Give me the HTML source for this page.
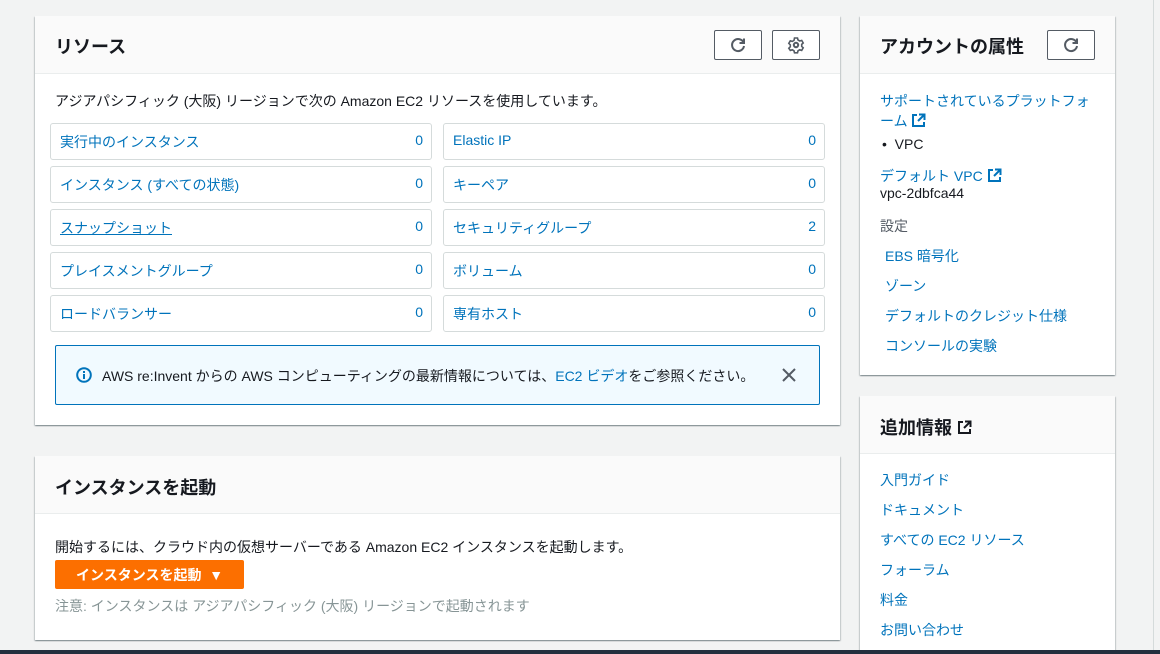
<!DOCTYPE html>
<html><head><meta charset="utf-8"><style>
*{box-sizing:border-box;margin:0;padding:0}
html,body{width:1160px;height:654px;overflow:hidden}
body{background:#f2f3f3;font-family:"Liberation Sans","Noto Sans CJK JP",sans-serif;color:#16191f;font-size:14px;position:relative}
.p{position:absolute;background:#fff;box-shadow:0 1px 1px 0 rgba(0,28,36,.3),1px 1px 1px 0 rgba(0,28,36,.15),-1px 1px 1px 0 rgba(0,28,36,.15)}
.h{position:absolute;left:0;right:0;top:0;background:#fafafa;border-bottom:1px solid #eaeded}
.h b{position:absolute;left:20px;font-size:18px;font-weight:bold}
.a{position:absolute;white-space:nowrap}
.l{color:#0073bb}
.btn{position:absolute;width:48px;height:30px;border:1px solid #545b64;background:#fff;border-radius:2px;display:flex;align-items:center;justify-content:center}
.c{position:absolute;width:382px;height:37px;border:1px solid #d5dbdb;border-radius:3px;color:#0073bb}
.c span{position:absolute;left:9px;top:8px}
.c i{position:absolute;right:8px;top:8px;font-style:normal}
</style></head><body>
<div class="p" style="left:35px;top:16px;width:805px;height:409px">
 <div class="h" style="height:58px"><b style="top:17px">リソース</b></div>
 <div class="btn" style="left:679px;top:14px"><svg width="18" height="18" viewBox="0 0 18 18" fill="none" stroke="#545b64" stroke-width="2"><path d="M14.5 6.5A6 6 0 1 0 15 10"/><path d="M15 2.5v4.5h-4.5"/></svg></div>
 <div class="btn" style="left:737px;top:14px"><svg width="18" height="18" viewBox="0 0 18 18" fill="none" stroke="#545b64" stroke-width="2"><circle cx="9" cy="9" r="2.2"/><path d="M7.5 2h3l.5 2 1.7 1 2-.6 1.5 2.6-1.5 1.4v2l1.5 1.4-1.5 2.6-2-.6-1.7 1-.5 2h-3l-.5-2-1.7-1-2 .6L1.8 12.2 3.3 10.8v-2L1.8 7.4 3.3 4.8l2 .6L7 4.4z" stroke-width="1.6"/></svg></div>
 <div class="a" style="left:20px;top:75px">アジアパシフィック (大阪) リージョンで次の Amazon EC2 リソースを使用しています。</div>
</div>
<div class="c" style="left:50px;top:123px"><span>実行中のインスタンス</span><i>0</i></div>
<div class="c" style="left:443px;top:123px"><span>Elastic IP</span><i>0</i></div>
<div class="c" style="left:50px;top:166px"><span>インスタンス (すべての状態)</span><i>0</i></div>
<div class="c" style="left:443px;top:166px"><span>キーペア</span><i>0</i></div>
<div class="c" style="left:50px;top:209px"><span style="text-decoration:underline">スナップショット</span><i>0</i></div>
<div class="c" style="left:443px;top:209px"><span>セキュリティグループ</span><i>2</i></div>
<div class="c" style="left:50px;top:252px"><span>プレイスメントグループ</span><i>0</i></div>
<div class="c" style="left:443px;top:252px"><span>ボリューム</span><i>0</i></div>
<div class="c" style="left:50px;top:295px"><span>ロードバランサー</span><i>0</i></div>
<div class="c" style="left:443px;top:295px"><span>専有ホスト</span><i>0</i></div>
<div style="position:absolute;left:55px;top:345px;width:765px;height:60px;background:#f1faff;border:1px solid #0073bb;border-radius:2px">
 <svg style="position:absolute;left:20px;top:21px" width="16" height="16" viewBox="0 0 16 16"><circle cx="8" cy="8" r="6.8" fill="none" stroke="#0073bb" stroke-width="2"/><rect x="7" y="7" width="2" height="5" fill="#0073bb"/><rect x="7" y="4" width="2" height="2" fill="#0073bb"/></svg>
 <div class="a" style="left:46px;top:20px">AWS re:Invent からの AWS コンピューティングの最新情報については、<span class="l">EC2 ビデオ</span>をご参照ください。</div>
 <svg style="position:absolute;left:726px;top:22px" width="14" height="14" viewBox="0 0 14 14" stroke="#545b64" stroke-width="2"><path d="M1 1l12 12M13 1L1 13"/></svg>
</div>
<div class="p" style="left:35px;top:456px;width:805px;height:184px">
 <div class="h" style="height:58px"><b style="top:18px">インスタンスを起動</b></div>
 <div class="a" style="left:20px;top:81px">開始するには、クラウド内の仮想サーバーである Amazon EC2 インスタンスを起動します。</div>
 <div class="a" style="left:20px;top:104px;width:189px;height:29px;background:#fc6f00;border-radius:2px;color:#fff;font-weight:bold;font-size:14px;padding:5px 0 0 21px">インスタンスを起動 &nbsp;▼</div>
 <div class="a" style="left:20px;top:140px;color:#879596">注意: インスタンスは アジアパシフィック (大阪) リージョンで起動されます</div>
</div>
<div class="p" style="left:860px;top:16px;width:255px;height:359px">
 <div class="h" style="height:58px"><b style="top:17px">アカウントの属性</b></div>
 <div class="btn" style="left:187px;top:14px"><svg width="18" height="18" viewBox="0 0 18 18" fill="none" stroke="#545b64" stroke-width="2"><path d="M14.5 6.5A6 6 0 1 0 15 10"/><path d="M15 2.5v4.5h-4.5"/></svg></div>
 <div class="a l" style="left:20px;top:75px">サポートされているプラットフォ</div>
 <div class="a l" style="left:20px;top:95px">ーム <svg width="15" height="15" viewBox="0 0 15 15" fill="none" stroke="#0073bb" stroke-width="2" style="vertical-align:-2px"><path d="M6 2H2v11h11V9M8 1.5h5.5V7M13 2L7 8"/></svg></div>
 <div class="a" style="left:22px;top:120px">•&nbsp; VPC</div>
 <div class="a l" style="left:20px;top:150px">デフォルト VPC <svg width="15" height="15" viewBox="0 0 15 15" fill="none" stroke="#0073bb" stroke-width="2" style="vertical-align:-2px"><path d="M6 2H2v11h11V9M8 1.5h5.5V7M13 2L7 8"/></svg></div>
 <div class="a" style="left:20px;top:169px">vpc-2dbfca44</div>
 <div class="a" style="left:20px;top:200px;color:#545b64">設定</div>
 <div class="a l" style="left:25px;top:230px">EBS 暗号化</div>
 <div class="a l" style="left:25px;top:260px">ゾーン</div>
 <div class="a l" style="left:25px;top:290px">デフォルトのクレジット仕様</div>
 <div class="a l" style="left:25px;top:320px">コンソールの実験</div>
</div>
<div class="p" style="left:860px;top:396px;width:255px;height:258px">
 <div class="h" style="height:58px"><b style="top:18px">追加情報 <svg width="15" height="15" viewBox="0 0 15 15" fill="none" stroke="#16191f" stroke-width="2" style="vertical-align:-1px"><path d="M6 2H2v11h11V9M8 1.5h5.5V7M13 2L7 8"/></svg></b></div>
 <div class="a l" style="left:20px;top:74px">入門ガイド</div>
 <div class="a l" style="left:20px;top:104px">ドキュメント</div>
 <div class="a l" style="left:20px;top:134px">すべての EC2 リソース</div>
 <div class="a l" style="left:20px;top:164px">フォーラム</div>
 <div class="a l" style="left:20px;top:194px">料金</div>
 <div class="a l" style="left:20px;top:224px">お問い合わせ</div>
</div>
<div style="position:absolute;left:1153px;top:0;width:1px;height:654px;background:#d5dbdb"></div>
<div style="position:absolute;left:0;top:650px;width:1160px;height:4px;background:#232f3e"></div>
</body></html>
